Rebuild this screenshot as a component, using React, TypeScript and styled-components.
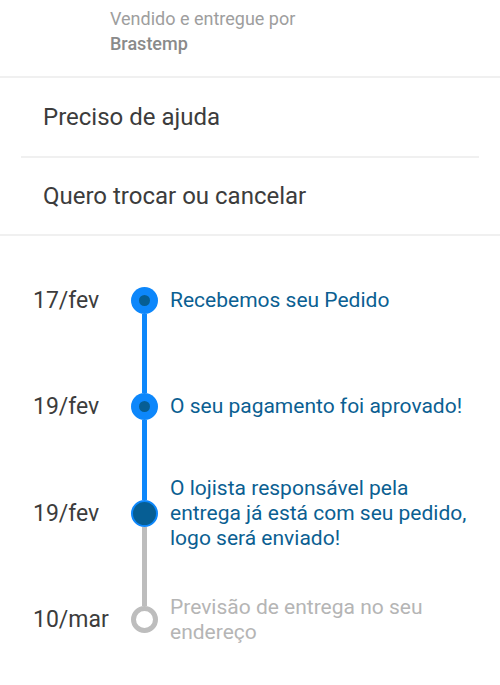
import React from "react";
import styled, { createGlobalStyle } from "styled-components";

type Step = "done" | "current" | "pending";

interface TrackingStep {
  date: string;
  label: string;
  state: Step;
}

const steps: TrackingStep[] = [
  { date: "17/fev", label: "Recebemos seu Pedido", state: "done" },
  { date: "19/fev", label: "O seu pagamento foi aprovado!", state: "done" },
  {
    date: "19/fev",
    label: "O lojista responsável pela entrega já está com seu pedido, logo será enviado!",
    state: "current",
  },
  { date: "10/mar", label: "Previsão de entrega no seu endereço", state: "pending" },
];

const BLUE = "#0d87fb";
const GRAY = "#bdbdbd";

const App = () => {
  return (
    <>
      <GlobalStyle />
      <Page>
        <SellerInfo>
          <span>Vendido e entregue por</span>
          <strong>Brastemp</strong>
        </SellerInfo>
        <Menu>
          <MenuItem>Preciso de ajuda</MenuItem>
          <MenuItem>Quero trocar ou cancelar</MenuItem>
        </Menu>
        <Timeline>
          {steps.map((step, i) => {
            const prev = steps[i - 1];
            const next = steps[i + 1];
            return (
              <TimelineRow key={i}>
                <DateLabel>{step.date}</DateLabel>
                <Track>
                  <LineTop $color={prev ? (step.state === "pending" ? GRAY : BLUE) : "transparent"} />
                  <Dot $state={step.state} />
                  <LineBottom $color={next ? (next.state === "pending" ? GRAY : BLUE) : "transparent"} />
                </Track>
                <StepText $state={step.state}>{step.label}</StepText>
              </TimelineRow>
            );
          })}
        </Timeline>
      </Page>
    </>
  );
};

export default App;

const GlobalStyle = createGlobalStyle`
  body {
    margin: 0;
    background: #fff;
    font-family: Roboto, "Noto Sans", sans-serif;
  }
`;

const Page = styled.div`
  width: 500px;
  background: #fff;
`;

const SellerInfo = styled.div`
  display: flex;
  flex-direction: column;
  padding: 6px 0 20px 110px;
  font-size: 18px;
  line-height: 25px;
  color: #9e9e9e;
  border-bottom: 2px solid #f0f0f0;

  strong {
    font-weight: 500;
    color: #8a8a8a;
  }
`;

const Menu = styled.div`
  padding: 0 21px;
  border-bottom: 2px solid #f0f0f0;
`;

const MenuItem = styled.div`
  height: 78px;
  display: flex;
  align-items: center;
  padding-left: 22px;
  font-size: 24px;
  color: #3c3c3c;

  & + & {
    border-top: 2px solid #f0f0f0;
    height: 76px;
  }
`;

const Timeline = styled.div`
  padding-top: 11px;
`;

const TimelineRow = styled.div`
  display: grid;
  grid-template-columns: 131px 27px 1fr;
  height: 106.5px;
`;

const DateLabel = styled.div`
  align-self: center;
  padding-left: 33px;
  font-size: 23px;
  color: #3c3c3c;
`;

const Track = styled.div`
  display: flex;
  flex-direction: column;
  align-items: center;
`;

const LineTop = styled.div<{ $color: string }>`
  flex: 1;
  width: 5px;
  background: ${({ $color }) => $color};
`;

const LineBottom = styled(LineTop)``;

const Dot = styled.div<{ $state: Step }>`
  box-sizing: border-box;
  width: 27px;
  height: 27px;
  border-radius: 50%;
  flex-shrink: 0;
  display: flex;
  align-items: center;
  justify-content: center;
  background: ${({ $state }) =>
    $state === "done" ? BLUE : $state === "current" ? "#065e94" : "#fff"};
  border: ${({ $state }) =>
    $state === "current" ? `2px solid ${BLUE}` : $state === "pending" ? `5px solid ${GRAY}` : "none"};

  &::after {
    content: "";
    display: ${({ $state }) => ($state === "done" ? "block" : "none")};
    width: 11px;
    height: 11px;
    border-radius: 50%;
    background: #065e94;
  }
`;

const StepText = styled.div<{ $state: Step }>`
  align-self: center;
  padding: 0 20px 0 12px;
  font-size: 21px;
  line-height: 25px;
  color: ${({ $state }) => ($state === "pending" ? "#b5b5b5" : "#0b5f92")};
`;
